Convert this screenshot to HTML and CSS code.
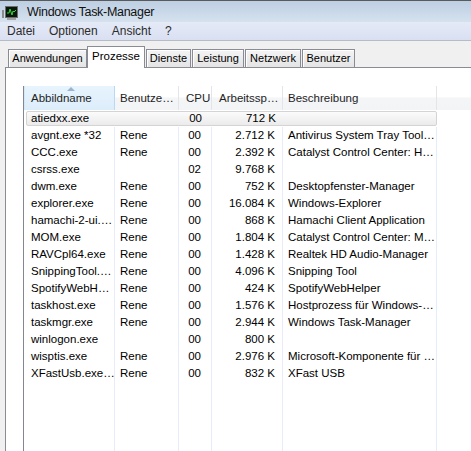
FILE: index.html
```html
<!DOCTYPE html>
<html lang="de">

<head>
  <meta charset="UTF-8">
  <title>Windows Task-Manager</title>
  <link rel="stylesheet" href="styles.css">
</head>

<body>
  <div class="window">
    <div class="titlebar">
      <svg class="appIcon" width="16" height="14" viewBox="0 0 16 14">
        <rect x="0" y="4" width="2" height="8" fill="#8c8c8c" />
        <rect x="3" y="0" width="13" height="12" fill="#6e6e6e" />
        <rect x="4" y="1" width="11" height="10" fill="#0a170c" />
        <polyline points="5,7 7,7 8,3 10,9 11,5 12,6 14,4" fill="none" stroke="#33d63a" stroke-width="1" />
        <rect x="5" y="12" width="9" height="2" fill="#a3a3a3" />
      </svg>
      <span class="title">Windows Task-Manager</span>
    </div>

    <div class="menubar">
      <span class="menu">Datei</span>
      <span class="menu">Optionen</span>
      <span class="menu">Ansicht</span>
      <span class="menu">?</span>
    </div>

    <div class="client">
      <div class="tabs">
        <span class="tab tApps">Anwendungen</span>
        <span class="tab active tProc">Prozesse</span>
        <span class="tab tServ">Dienste</span>
        <span class="tab tPerf">Leistung</span>
        <span class="tab tNet">Netzwerk</span>
        <span class="tab tUser">Benutzer</span>
      </div>

      <div class="page">
        <div class="list">
          <div class="head">
            <div class="hcell sorted"><span class="sortArrow"></span>Abbildname</div>
            <div class="hcell c2">Benutze…</div>
            <div class="hcell c3">CPU</div>
            <div class="hcell c4">Arbeitssp…</div>
            <div class="hcell c5">Beschreibung</div>
            <div class="hcell rest"></div>
          </div>

          <div class="rows">
            <div class="row hot">
              <div class="c c1">atiedxx.exe</div>
              <div class="c c2"></div>
              <div class="c c3">00</div>
              <div class="c c4">712 K</div>
              <div class="c c5"></div>
            </div>
            <div class="row">
              <div class="c c1">avgnt.exe *32</div>
              <div class="c c2">Rene</div>
              <div class="c c3">00</div>
              <div class="c c4">2.712 K</div>
              <div class="c c5">Antivirus System Tray Tool…</div>
              <div class="c rest"></div>
            </div>
            <div class="row">
              <div class="c c1">CCC.exe</div>
              <div class="c c2">Rene</div>
              <div class="c c3">00</div>
              <div class="c c4">2.392 K</div>
              <div class="c c5">Catalyst Control Center: H…</div>
              <div class="c rest"></div>
            </div>
            <div class="row">
              <div class="c c1">csrss.exe</div>
              <div class="c c2"></div>
              <div class="c c3">02</div>
              <div class="c c4">9.768 K</div>
              <div class="c c5"></div>
              <div class="c rest"></div>
            </div>
            <div class="row">
              <div class="c c1">dwm.exe</div>
              <div class="c c2">Rene</div>
              <div class="c c3">00</div>
              <div class="c c4">752 K</div>
              <div class="c c5">Desktopfenster-Manager</div>
              <div class="c rest"></div>
            </div>
            <div class="row">
              <div class="c c1">explorer.exe</div>
              <div class="c c2">Rene</div>
              <div class="c c3">00</div>
              <div class="c c4">16.084 K</div>
              <div class="c c5">Windows-Explorer</div>
              <div class="c rest"></div>
            </div>
            <div class="row">
              <div class="c c1">hamachi-2-ui.…</div>
              <div class="c c2">Rene</div>
              <div class="c c3">00</div>
              <div class="c c4">868 K</div>
              <div class="c c5">Hamachi Client Application</div>
              <div class="c rest"></div>
            </div>
            <div class="row">
              <div class="c c1">MOM.exe</div>
              <div class="c c2">Rene</div>
              <div class="c c3">00</div>
              <div class="c c4">1.804 K</div>
              <div class="c c5">Catalyst Control Center: M…</div>
              <div class="c rest"></div>
            </div>
            <div class="row">
              <div class="c c1">RAVCpl64.exe</div>
              <div class="c c2">Rene</div>
              <div class="c c3">00</div>
              <div class="c c4">1.428 K</div>
              <div class="c c5">Realtek HD Audio-Manager</div>
              <div class="c rest"></div>
            </div>
            <div class="row">
              <div class="c c1">SnippingTool.…</div>
              <div class="c c2">Rene</div>
              <div class="c c3">00</div>
              <div class="c c4">4.096 K</div>
              <div class="c c5">Snipping Tool</div>
              <div class="c rest"></div>
            </div>
            <div class="row">
              <div class="c c1">SpotifyWebH…</div>
              <div class="c c2">Rene</div>
              <div class="c c3">00</div>
              <div class="c c4">424 K</div>
              <div class="c c5">SpotifyWebHelper</div>
              <div class="c rest"></div>
            </div>
            <div class="row">
              <div class="c c1">taskhost.exe</div>
              <div class="c c2">Rene</div>
              <div class="c c3">00</div>
              <div class="c c4">1.576 K</div>
              <div class="c c5">Hostprozess für Windows-…</div>
              <div class="c rest"></div>
            </div>
            <div class="row">
              <div class="c c1">taskmgr.exe</div>
              <div class="c c2">Rene</div>
              <div class="c c3">00</div>
              <div class="c c4">2.944 K</div>
              <div class="c c5">Windows Task-Manager</div>
              <div class="c rest"></div>
            </div>
            <div class="row">
              <div class="c c1">winlogon.exe</div>
              <div class="c c2"></div>
              <div class="c c3">00</div>
              <div class="c c4">800 K</div>
              <div class="c c5"></div>
              <div class="c rest"></div>
            </div>
            <div class="row">
              <div class="c c1">wisptis.exe</div>
              <div class="c c2">Rene</div>
              <div class="c c3">00</div>
              <div class="c c4">2.976 K</div>
              <div class="c c5">Microsoft-Komponente für …</div>
              <div class="c rest"></div>
            </div>
            <div class="row">
              <div class="c c1">XFastUsb.exe…</div>
              <div class="c c2">Rene</div>
              <div class="c c3">00</div>
              <div class="c c4">832 K</div>
              <div class="c c5">XFast USB</div>
              <div class="c rest"></div>
            </div>
            <div class="row fill">
              <div class="c c1"></div>
              <div class="c c2"></div>
              <div class="c c3"></div>
              <div class="c c4"></div>
              <div class="c c5"></div>
              <div class="c rest"></div>
            </div>
          </div>
        </div>
      </div>
    </div>
  </div>
</body>

</html>
```

FILE: styles.css
```css
body {
  margin: 0;
  width: 471px;
  height: 451px;
  overflow: hidden;
  background-color: #f0f0f0;
  font-family: "Liberation Sans", Arial, sans-serif;
}

.window {
  height: 451px;
  overflow: hidden;
}

/* title + menu */
.titlebar {
  height: 21px;
  border-top: 1px solid #5a5a5a;
  background: linear-gradient(#bdcfe3, #d5e1ee);
  display: flex;
  align-items: center;
  padding-left: 2px;
}

.appIcon {
  display: block;
  margin-top: 2px;
}

.title {
  margin-left: 9px;
  font-size: 12.5px;
  letter-spacing: -0.3px;
  color: #111;
}

.menubar {
  height: 18px;
  background: linear-gradient(#e5eaf7, #d9e0f1);
  border-bottom: 1px solid #b6bcc6;
  display: flex;
  align-items: center;
}

.menu {
  padding: 0 7px;
  font-size: 12px;
  color: #2c2c2c;
}

/* tabs */
.client {
  padding-left: 5px;
}

.tabs {
  height: 26px;
  display: flex;
  align-items: flex-end;
  padding-left: 3px;
}

.tab {
  box-sizing: border-box;
  height: 18px;
  line-height: 17px;
  margin-left: 1px;
  border: 1px solid #898c95;
  border-bottom: none;
  background: linear-gradient(#f4f4f4, #e4e4e4);
  box-shadow: inset 1px 1px 0 #fff;
  font-size: 11px;
  text-align: center;
  color: #000;
}

.tab.active {
  position: relative;
  z-index: 1;
  height: 22px;
  line-height: 18px;
  margin-bottom: -1px;
  background: #fff;
  box-shadow: none;
  font-size: 11.5px;
}

.tApps { width: 79px; margin-left: 0; }
.tProc { width: 58px; margin-left: 0; }
.tServ { width: 45px; }
.tPerf { width: 52px; }
.tNet { width: 56px; }
.tUser { width: 53px; }

.page {
  height: 400px;
  background: #fff;
  border-top: 1px solid #898c95;
  border-left: 1px solid #898c95;
  padding: 18px 0 0 17px;
}

/* list view */
.list {
  height: 380px;
  border-left: 1px solid #828790;
  display: flex;
  flex-direction: column;
  font-size: 11.5px;
}

.head,
.row {
  display: grid;
  grid-template-columns: 91px 64px 33px 71px 154px 1fr;
}

.head {
  height: 24px;
}

.hcell {
  position: relative;
  box-sizing: border-box;
  line-height: 24px;
  white-space: nowrap;
  overflow: hidden;
  color: #1e1e1e;
  background: linear-gradient(#fff 0, #fff 45%, #f4f5f7 50%, #f3f4f6 100%);
  border-right: 1px solid #e3e5e9;
}

.hcell.sorted {
  padding-left: 6px;
  background: linear-gradient(#e8f4fd, #dcedfa);
  border-left: 1px solid #d3e8f8;
  border-right: 1px solid #b9d8f1;
  overflow: visible;
}

.sortArrow {
  position: absolute;
  left: 42px;
  top: 1px;
  width: 0;
  height: 0;
  border-left: 4px solid transparent;
  border-right: 4px solid transparent;
  border-bottom: 4px solid #9ab4d0;
}

.hcell.c2 { padding-left: 5px; }
.hcell.c3 { padding-left: 7px; }
.hcell.c4 { padding-left: 7px; }
.hcell.c5 { padding-left: 5px; }
.hcell.rest { border-right: none; }

.rows {
  flex: 1;
  display: flex;
  flex-direction: column;
}

.c {
  box-sizing: border-box;
  line-height: 17px;
  white-space: nowrap;
  overflow: hidden;
  color: #000;
  border-right: 1px solid #e6edfa;
}

.c1 { padding-left: 7px; }
.c2 { padding-left: 5px; }
.c3 { text-align: right; padding-right: 10px; }
.c4 { text-align: right; padding-right: 7px; }
.c5 { padding-left: 5px; }
.c.rest { border-right: none; }

.row.fill {
  flex: 1;
}

/* hovered row */
.row.hot {
  grid-template-columns: 88px 64px 33px 71px 153px;
  width: 411px;
  box-sizing: border-box;
  margin: 1px 0 1px 2px;
  border: 1px solid #d4d4d4;
  border-radius: 2px;
  background: linear-gradient(#fbfbfb, #ebebeb);
}

.row.hot .c {
  line-height: 13px;
  border-right: none;
}

.row.hot .c1 {
  padding-left: 4px;
}
```
